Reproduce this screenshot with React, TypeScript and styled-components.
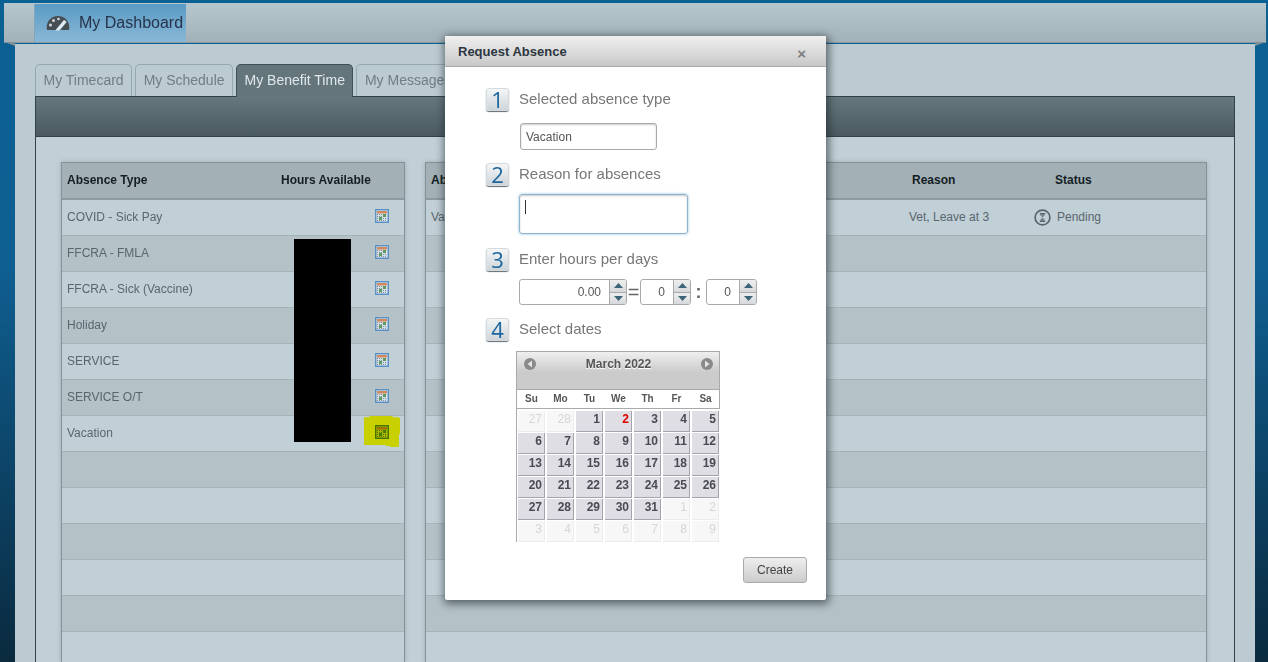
import React from 'react'
import styled, { createGlobalStyle } from 'styled-components'

const FONT = '"Liberation Sans", Arial, sans-serif'

const leftRows = [
	'COVID - Sick Pay',
	'FFCRA - FMLA',
	'FFCRA - Sick (Vaccine)',
	'Holiday',
	'SERVICE',
	'SERVICE O/T',
	'Vacation',
	'',
	'',
	'',
	'',
	'',
	'',
]

const tabs = ['My Timecard', 'My Schedule', 'My Benefit Time', 'My Messages']
const weekDays = ['Su', 'Mo', 'Tu', 'We', 'Th', 'Fr', 'Sa']

const buildDays = () => {
	const days: { label: number; off: boolean }[] = []
	days.push({ label: 27, off: true }, { label: 28, off: true })
	for (let i = 1; i <= 31; i++) days.push({ label: i, off: false })
	for (let i = 1; i <= 9; i++) days.push({ label: i, off: true })
	return days
}

export default function App() {
	return (
		<>
			<GlobalStyle />
			<Page>
				<TopBar>
					<DashTab>
						<GaugeIcon />
						My Dashboard
					</DashTab>
				</TopBar>
				<Main>
					<TabRow>
						{tabs.map(t => (
							<Tab key={t} $active={t === 'My Benefit Time'}>
								{t}
							</Tab>
						))}
					</TabRow>
					<TabPanel>
						<PanelHead />
						<PanelBody>
							<LeftTable>
								<HeadRow>
									<HeadCell $width={214}>Absence Type</HeadCell>
									<HeadCell>Hours Available</HeadCell>
								</HeadRow>
								{leftRows.map((name, i) => (
									<Row key={i} $alt={i % 2 === 1}>
										<NameCell>{name}</NameCell>
										{name && (
											<IconCell $marked={name === 'Vacation'}>
												<CalendarIcon />
											</IconCell>
										)}
									</Row>
								))}
								<Redaction />
							</LeftTable>
							<RightTable>
								<HeadRow>
									<HeadCell $width={481}>Absence Type</HeadCell>
									<HeadCell $width={143}>Reason</HeadCell>
									<HeadCell>Status</HeadCell>
								</HeadRow>
								{leftRows.map((_, i) => (
									<Row key={i} $alt={i % 2 === 1}>
										{i === 0 && (
											<>
												<NameCell $width={478}>Vacation</NameCell>
												<ReasonCell>Vet, Leave at 3</ReasonCell>
												<StatusCell>
													<HourglassIcon />
													Pending
												</StatusCell>
											</>
										)}
									</Row>
								))}
							</RightTable>
						</PanelBody>
					</TabPanel>
				</Main>
				<Modal>
					<ModalTitle>
						Request Absence
						<CloseMark>×</CloseMark>
					</ModalTitle>
					<ModalBody>
						<Step>
							<StepBadge>1</StepBadge>
							<StepLabel>Selected absence type</StepLabel>
						</Step>
						<TypeInput>Vacation</TypeInput>
						<Step>
							<StepBadge>2</StepBadge>
							<StepLabel>Reason for absences</StepLabel>
						</Step>
						<ReasonBox>
							<Caret />
						</ReasonBox>
						<Step>
							<StepBadge>3</StepBadge>
							<StepLabel>Enter hours per days</StepLabel>
						</Step>
						<SpinnerRow>
							<Spinner $width={108}>
								<SpinValue>0.00</SpinValue>
								<SpinButtons />
							</Spinner>
							<Equals>=</Equals>
							<Spinner $width={51}>
								<SpinValue>0</SpinValue>
								<SpinButtons />
							</Spinner>
							<Colon>:</Colon>
							<Spinner $width={51}>
								<SpinValue>0</SpinValue>
								<SpinButtons />
							</Spinner>
						</SpinnerRow>
						<Step>
							<StepBadge>4</StepBadge>
							<StepLabel>Select dates</StepLabel>
						</Step>
						<Calendar>
							<CalHead>
								<NavDot>
									<svg width="6" height="8" viewBox="0 0 6 8">
										<path d="M5 0.5V7.5L0.5 4Z" fill="#e4e4e4" />
									</svg>
								</NavDot>
								<CalTitle>March 2022</CalTitle>
								<NavDot>
									<svg width="6" height="8" viewBox="0 0 6 8">
										<path d="M1 0.5V7.5L5.5 4Z" fill="#e4e4e4" />
									</svg>
								</NavDot>
							</CalHead>
							<WeekRow>
								{weekDays.map(d => (
									<WeekDay key={d}>{d}</WeekDay>
								))}
							</WeekRow>
							<DayGrid>
								{buildDays().map((d, i) => (
									<Day key={i} $off={d.off} $today={!d.off && d.label === 2}>
										{d.label}
									</Day>
								))}
							</DayGrid>
						</Calendar>
						<Footer>
							<CreateButton>Create</CreateButton>
						</Footer>
					</ModalBody>
				</Modal>
			</Page>
		</>
	)
}

function GaugeIcon() {
	return (
		<svg
			width="24"
			height="16"
			viewBox="0 0 24 16"
			style={{ marginRight: 9, flex: 'none' }}
		>
			<path
				d="M1 15C-0.5 8 4 1 12 1C20 1 24.5 8 23 15H14.5L20.5 7L18 5L9.5 15Z"
				fill="#474f55"
			/>
			<path d="M9.5 15.5L18 5L20.5 7L13 15.5Z" fill="#e4ebef" />
			<circle cx="4.5" cy="10" r="1.5" fill="#cfd9df" />
			<circle cx="7.5" cy="5.5" r="1.5" fill="#cfd9df" />
			<circle cx="12.5" cy="4" r="1.3" fill="#cfd9df" />
		</svg>
	)
}

function CalendarIcon() {
	return (
		<svg width="14" height="14" viewBox="0 0 14 14">
			<rect x="0.7" y="0.7" width="12.6" height="12.6" fill="#d5dfe8" stroke="#5a8fc6" strokeWidth="1.4" />
			<rect x="2" y="2" width="10" height="2.5" fill="#d0885c" />
			<path
				d="M2 5.5h10M2 7.5h10M2 9.5h10M2 11.5h10"
				stroke="#848f9b"
				strokeDasharray="1 1"
			/>
			<rect x="4" y="8" width="3" height="3" fill="#5c9a60" />
			<rect x="8" y="5" width="3" height="3" fill="#5c9a60" />
		</svg>
	)
}

function HourglassIcon() {
	return (
		<svg
			width="17"
			height="17"
			viewBox="0 0 17 17"
			style={{ marginRight: 6, flex: 'none' }}
		>
			<circle cx="8.5" cy="8.5" r="7.4" fill="none" stroke="#56646c" strokeWidth="1.7" />
			<path d="M5.8 4.6h5.4M5.8 12.4h5.4" stroke="#56646c" strokeWidth="1.1" />
			<path d="M6.3 5v1.2L8.5 8.5 10.7 6.2V5ZM8.5 8.5 6.3 10.8V12h4.4v-1.2Z" fill="#74828a" />
		</svg>
	)
}

function SpinButtons() {
	return (
		<SpinColumn>
			<SpinButton>
				<svg width="9" height="5" viewBox="0 0 9 5">
					<path d="M4.5 0L9 5H0Z" fill="#3e6478" />
				</svg>
			</SpinButton>
			<SpinButton>
				<svg width="9" height="5" viewBox="0 0 9 5">
					<path d="M4.5 5L9 0H0Z" fill="#3e6478" />
				</svg>
			</SpinButton>
		</SpinColumn>
	)
}

const GlobalStyle = createGlobalStyle`
	html, body {
		margin: 0;
		padding: 0;
		height: 662px;
		overflow: hidden;
	}
	body {
		font-family: ${FONT};
		background: linear-gradient(#0b6094 0%, #0f5f92 40%, #0a2a3e 100%);
	}
`

const Page = styled.div`
	position: relative;
	height: 662px;
	overflow: hidden;
	padding-top: 3px;
	box-sizing: border-box;
`

const TopBar = styled.div`
	position: relative;
	height: 40px;
	margin: 0 2px 0 4px;
	padding: 1px 0 0 30px;
	box-sizing: border-box;
	background: linear-gradient(#b6c6cd, #a3b2b9);
	border-bottom: 1px solid #8a9aa1;
	display: flex;
	align-items: flex-start;
	&::before,
	&::after {
		content: '';
		position: absolute;
		top: 100%;
		border-top: 4px solid #7f8f96;
	}
	&::before {
		left: 0;
		border-left: 11px solid transparent;
	}
	&::after {
		right: 0;
		border-right: 11px solid transparent;
	}
`

const DashTab = styled.div`
	width: 152px;
	height: 38px;
	box-sizing: border-box;
	padding-left: 11px;
	display: flex;
	align-items: center;
	font-size: 16px;
	white-space: nowrap;
	color: #26334a;
	background: linear-gradient(#5a9ac3, #8ab8d6);
	border-left: 1px solid #7fa6bf;
`

const Main = styled.div`
	margin: 1px 13px 0 15px;
	height: 640px;
	padding: 20px 20px 0;
	box-sizing: border-box;
	background: #bccbd2;
`

const TabRow = styled.div`
	display: flex;
	gap: 3px;
	height: 33px;
`

const Tab = styled.div<{ $active?: boolean }>`
	box-sizing: border-box;
	height: ${p => (p.$active ? 33 : 32)}px;
	padding: 7px 7.5px 0;
	font-size: 14px;
	white-space: nowrap;
	border: 1px solid ${p => (p.$active ? '#3f4f56' : '#98a8af')};
	border-bottom: none;
	border-radius: 5px 5px 0 0;
	color: ${p => (p.$active ? '#dfe8ec' : '#6f7d85')};
	background: ${p => (p.$active ? '#65757c' : '#bccbd2')};
`

const TabPanel = styled.div`
	width: 1200px;
	height: 580px;
	box-sizing: border-box;
	border: 1px solid #33424a;
	border-bottom: none;
	margin-top: -1px;
`

const PanelHead = styled.div`
	height: 39px;
	background: linear-gradient(#67777e, #4b5a61);
	border-bottom: 1px solid #33424a;
`

const PanelBody = styled.div`
	display: flex;
	gap: 20px;
	padding: 25px 0 0 25px;
	background: #c1cfd6;
	height: 500px;
`

const LeftTable = styled.div`
	position: relative;
	width: 344px;
	flex: none;
	box-sizing: border-box;
	border: 1px solid #84939a;
	box-shadow: 0 0 4px rgba(90, 105, 112, 0.35);
`

const RightTable = styled(LeftTable)`
	width: 782px;
`

const HeadRow = styled.div`
	display: flex;
	align-items: center;
	height: 37px;
	background: #a3b1b7;
	border-bottom: 2px solid #8c9ba2;
	padding: 0 0 2px 5px;
	box-sizing: border-box;
`

const HeadCell = styled.div<{ $width?: number }>`
	font-size: 12px;
	font-weight: bold;
	color: #141d24;
	white-space: nowrap;
	${p => (p.$width ? `width: ${p.$width}px;` : '')}
`

const Row = styled.div<{ $alt?: boolean }>`
	position: relative;
	display: flex;
	align-items: center;
	height: 36px;
	box-sizing: border-box;
	padding: 0 0 1px 5px;
	border-bottom: 1px solid #a5b3ba;
	background: ${p => (p.$alt ? '#b4c2c8' : '#c1cfd6')};
`

const NameCell = styled.div<{ $width?: number }>`
	font-size: 12px;
	color: #59666e;
	flex: ${p => (p.$width ? 'none' : '1')};
	${p => (p.$width ? `width: ${p.$width}px;` : '')}
`

const IconCell = styled.div<{ $marked?: boolean }>`
	display: flex;
	margin: 0 15px 2px 0;
	position: relative;
	&::before {
		content: '';
		display: ${p => (p.$marked ? 'block' : 'none')};
		position: absolute;
		left: -11px;
		top: -9px;
		width: 36px;
		height: 31px;
		background: #c8d000;
		clip-path: polygon(
			0 1.3px, 5.3px 1.3px, 5.3px 0, 28.7px 0, 28.7px 1.3px, 34px 1.3px, 36px 2px,
			36px 18px, 35px 18px, 35px 30px, 33.7px 31px, 26px 31px, 26px 30px, 22px 30px,
			22px 29px, 0 29px
		);
	}
	svg {
		position: relative;
		${p => (p.$marked ? 'mix-blend-mode: multiply;' : '')}
	}
`

const Redaction = styled.div`
	position: absolute;
	left: 232px;
	top: 76px;
	width: 57px;
	height: 203px;
	background: #000;
`

const ReasonCell = styled.div`
	width: 125px;
	font-size: 12px;
	color: #59666e;
`

const StatusCell = styled.div`
	display: flex;
	align-items: center;
	font-size: 12px;
	color: #59666e;
`

const Modal = styled.div`
	position: absolute;
	left: 445px;
	top: 36px;
	width: 381px;
	height: 564px;
	background: #fff;
	border-radius: 2px;
	box-shadow: 1px 2px 8px 2px rgba(25, 35, 40, 0.6);
`

const ModalTitle = styled.div`
	display: flex;
	align-items: center;
	justify-content: space-between;
	height: 31px;
	box-sizing: border-box;
	padding: 0 20px 0 13px;
	font-size: 13px;
	font-weight: bold;
	color: #2c3640;
	background: linear-gradient(#f0f0f0, #c8c8c8);
	border-bottom: 1px solid #a9a9a9;
`

const CloseMark = styled.span`
	font-size: 15px;
	font-weight: bold;
	color: #7d7d7d;
	margin-top: 4px;
`

const ModalBody = styled.div`
	position: relative;
	padding: 20px 19px 0 41px;
`

const Step = styled.div`
	display: flex;
	align-items: center;
	height: 24px;
	font-size: 15px;
	color: #777;
`

const StepLabel = styled.span`
	margin-bottom: 2px;
`

const StepBadge = styled.span`
	width: 23px;
	height: 23px;
	margin-right: 10px;
	flex: none;
	display: flex;
	align-items: center;
	justify-content: center;
	font-family: 'Open Sans', ${FONT};
	font-size: 22px;
	font-weight: 400;
	color: #1c669f;
	border-radius: 3px;
	background: linear-gradient(#f4f6f7, #cfd5d9);
	border: 1px solid #d4dade;
	box-sizing: border-box;
	box-shadow: 0 1px 1px #5f6a70;
`

const TypeInput = styled.div`
	width: 137px;
	height: 27px;
	margin: 12px 0 12px 34px;
	padding-left: 5px;
	box-sizing: border-box;
	display: flex;
	align-items: center;
	font-size: 12px;
	color: #555;
	border: 1px solid #aaa;
	border-radius: 3px;
	box-shadow: inset 0 1px 2px #ccc;
`

const ReasonBox = styled.div`
	width: 169px;
	height: 40px;
	margin: 8px 0 13px 33px;
	padding: 5px 0 0 5px;
	box-sizing: border-box;
	border: 1px solid #8fb4cb;
	border-radius: 3px;
	box-shadow: 0 0 3px #8fc0dc, inset 0 1px 2px #ccc;
`

const Caret = styled.div`
	width: 1px;
	height: 14px;
	background: #333;
`

const SpinnerRow = styled.div`
	display: flex;
	align-items: center;
	height: 26px;
	margin: 8px 0 12px 33px;
`

const Spinner = styled.div<{ $width: number }>`
	display: flex;
	width: ${p => p.$width}px;
	height: 26px;
	box-sizing: border-box;
	border: 1px solid #aaa;
	border-radius: 3px;
	overflow: hidden;
`

const SpinValue = styled.div`
	flex: 1;
	display: flex;
	align-items: center;
	justify-content: flex-end;
	padding-right: 8px;
	font-size: 12px;
	color: #555;
`

const SpinColumn = styled.div`
	width: 17px;
	display: flex;
	flex-direction: column;
`

const SpinButton = styled.div`
	flex: 1;
	display: flex;
	align-items: center;
	justify-content: center;
	background: linear-gradient(#eee, #d6d9dc);
	border-left: 1px solid #aaa;
	&:first-child {
		border-bottom: 1px solid #aaa;
	}
`

const Equals = styled.span`
	width: 13px;
	text-align: center;
	font-size: 20px;
	color: #666;
`

const Colon = styled.span`
	width: 15px;
	text-align: center;
	font-size: 18px;
	font-weight: bold;
	color: #666;
`

const Calendar = styled.div`
	width: 204px;
	margin: 10px 0 0 30px;
	box-sizing: border-box;
	border-left: 1px solid #aaa;
	border-right: 1px solid transparent;
`

const CalHead = styled.div`
	height: 39px;
	box-sizing: border-box;
	margin-right: -1px;
	border: 1px solid #aaa;
	border-left: none;
	padding: 5px 6px 0 7px;
	display: flex;
	justify-content: space-between;
	background: linear-gradient(#efefef, #cbcbcb 55%);
`

const CalTitle = styled.div`
	font-size: 12px;
	font-weight: bold;
	color: #555;
	text-shadow: 0 1px 0 #fff;
`

const NavDot = styled.div`
	width: 12px;
	height: 12px;
	margin-top: 1px;
	border-radius: 50%;
	background: #8a8a8a;
	display: flex;
	align-items: center;
	justify-content: center;
`

const WeekRow = styled.div`
	display: grid;
	grid-template-columns: repeat(7, 29px);
	height: 19px;
	margin-right: -1px;
	border-right: 1px solid #aaa;
	border-bottom: 1px solid #aaa;
	box-sizing: border-box;
`

const WeekDay = styled.div`
	text-align: center;
	font-size: 10px;
	font-weight: bold;
	line-height: 18px;
	color: #555;
`

const DayGrid = styled.div`
	display: grid;
	grid-template-columns: repeat(7, 27px);
	grid-auto-rows: 21px;
	column-gap: 2px;
	row-gap: 1px;
	padding: 2px 0 0 1px;
`

const Day = styled.div<{ $off?: boolean; $today?: boolean }>`
	box-sizing: border-box;
	padding-right: 2px;
	text-align: right;
	font-size: 12px;
	font-weight: ${p => (p.$off ? 'normal' : 'bold')};
	line-height: 17px;
	color: ${p => (p.$today ? '#e00000' : p.$off ? '#d6d6d6' : '#4a4a52')};
	background: ${p => (p.$off ? '#f7f7f7' : '#dedee4')};
	border-bottom: 1px solid ${p => (p.$off ? '#ececec' : '#a4a4ac')};
	border-right: 1px solid ${p => (p.$off ? '#ececec' : '#a4a4ac')};
`

const Footer = styled.div`
	display: flex;
	justify-content: flex-end;
	margin-top: 15px;
`

const CreateButton = styled.div`
	width: 64px;
	height: 26px;
	box-sizing: border-box;
	display: flex;
	align-items: center;
	justify-content: center;
	font-size: 12px;
	color: #444;
	border: 1px solid #aaa;
	border-radius: 3px;
	background: linear-gradient(#eee, #ccc);
`
